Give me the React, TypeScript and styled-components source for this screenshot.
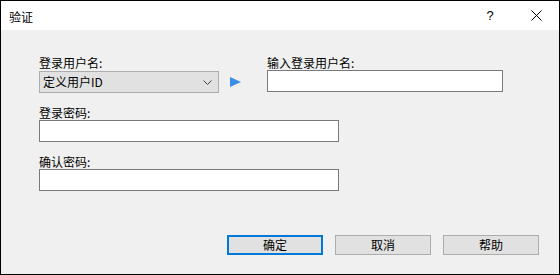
import React from 'react';
import styled, { createGlobalStyle } from 'styled-components';

const GlobalStyle = createGlobalStyle`
  html, body {
    margin: 0;
    padding: 0;
    background: #f0f0f0;
  }
  * {
    box-sizing: border-box;
  }
`;

const StyledWindow = styled.div`
  width: 560px;
  height: 275px;
  border: 1px solid #000;
  background-color: #f0f0f0;
  display: flex;
  flex-direction: column;
  font-family: 'Noto Sans CJK SC', 'Liberation Sans', sans-serif;
  font-size: 12px;
  color: #000;
`;

const StyledTitleBar = styled.div`
  height: 29px;
  background-color: #fff;
  display: flex;
  align-items: center;
  padding-left: 8px;
`;

const StyledTitle = styled.span`
  flex: 1;
  line-height: 14px;
  margin-top: 2px;
`;

const StyledTitleButton = styled.div`
  width: 46px;
  height: 29px;
  display: flex;
  align-items: center;
  justify-content: center;
  font-family: 'Liberation Sans', sans-serif;
  font-size: 13px;
`;

const StyledBody = styled.div`
  flex: 1;
  display: flex;
  flex-direction: column;
  padding: 26px 20px 19px 38px;
`;

const StyledTopRow = styled.div`
  display: flex;
  align-items: flex-start;
`;

const StyledField = styled.div<{ $width: number; $top?: number }>`
  display: flex;
  flex-direction: column;
  width: ${(p) => p.$width}px;
  margin-top: ${(p) => p.$top ?? 0}px;
`;

const StyledLabel = styled.label`
  line-height: 14px;
  height: 14px;
  white-space: nowrap;
`;

const StyledCombo = styled.div`
  height: 22px;
  background-color: #e1e1e1;
  border: 1px solid #adadad;
  display: flex;
  align-items: center;
  padding: 0 6px 0 3px;
  margin-top: 1px;
`;

const StyledComboText = styled.span`
  flex: 1;
  line-height: 14px;
`;

const StyledArrowSlot = styled.div`
  width: 48px;
  height: 22px;
  margin-top: 15px;
  display: flex;
  align-items: center;
  padding-left: 11px;
`;

const StyledInput = styled.input`
  height: 22px;
  border: 1px solid #7a7a7a;
  background-color: #fff;
  margin: 0;
  padding: 0 3px;
  outline: none;
`;

const StyledButtonRow = styled.div`
  margin-top: auto;
  display: flex;
  justify-content: flex-end;
  gap: 12px;
`;

const StyledButton = styled.button<{ $default?: boolean }>`
  width: 96px;
  height: 20px;
  padding: 0;
  background-color: #e1e1e1;
  border: ${(p) => (p.$default ? '2px solid #0078d7' : '1px solid #adadad')};
  font-family: 'Noto Sans CJK SC', sans-serif;
  font-size: 12px;
  line-height: 14px;
  color: #000;
`;

export default function App(): JSX.Element {
  return (
    <>
      <GlobalStyle />
      <StyledWindow>
        <StyledTitleBar>
          <StyledTitle>验证</StyledTitle>
          <StyledTitleButton>?</StyledTitleButton>
          <StyledTitleButton>
            <svg width="11" height="11" viewBox="0 0 11 11">
              <path d="M0.5 0.5 L10.5 10.5 M10.5 0.5 L0.5 10.5" stroke="#000" strokeWidth="1" />
            </svg>
          </StyledTitleButton>
        </StyledTitleBar>

        <StyledBody>
          <StyledTopRow>
            <StyledField $width={180}>
              <StyledLabel>登录用户名:</StyledLabel>
              <StyledCombo>
                <StyledComboText>定义用户ID</StyledComboText>
                <svg width="9" height="5" viewBox="0 0 9 5">
                  <path d="M0.5 0.5 L4.5 4.5 L8.5 0.5" stroke="#444" strokeWidth="1" fill="none" />
                </svg>
              </StyledCombo>
            </StyledField>

            <StyledArrowSlot>
              <svg width="11" height="10" viewBox="0 0 11 10">
                <path d="M0 0 L11 5 L0 10 Z" fill="#3c8de6" />
              </svg>
            </StyledArrowSlot>

            <StyledField $width={236}>
              <StyledLabel>输入登录用户名:</StyledLabel>
              <StyledInput type="text" />
            </StyledField>
          </StyledTopRow>

          <StyledField $width={300} $top={13}>
            <StyledLabel>登录密码:</StyledLabel>
            <StyledInput type="password" />
          </StyledField>

          <StyledField $width={300} $top={13}>
            <StyledLabel>确认密码:</StyledLabel>
            <StyledInput type="password" />
          </StyledField>

          <StyledButtonRow>
            <StyledButton $default>确定</StyledButton>
            <StyledButton>取消</StyledButton>
            <StyledButton>帮助</StyledButton>
          </StyledButtonRow>
        </StyledBody>
      </StyledWindow>
    </>
  );
}
